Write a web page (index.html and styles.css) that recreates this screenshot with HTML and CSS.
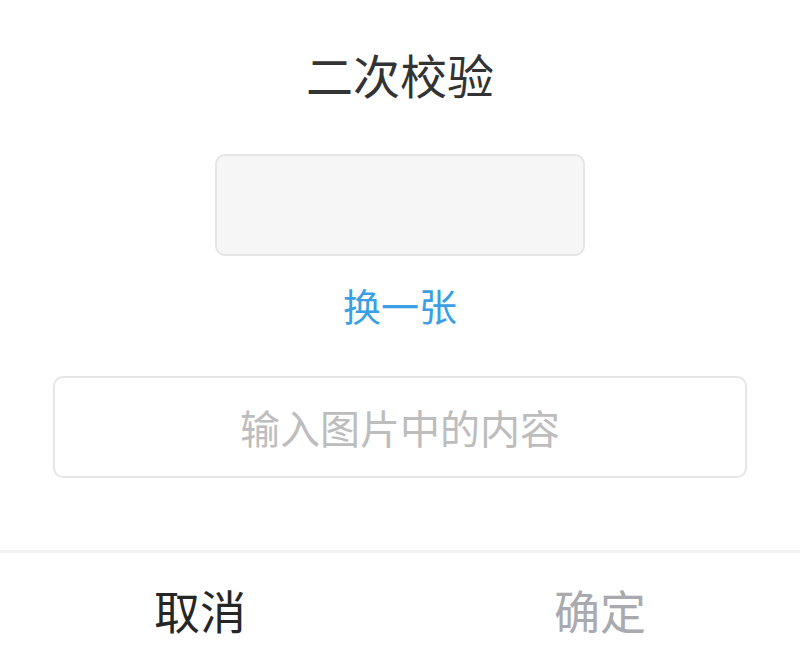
FILE: index.html
```html
<!DOCTYPE html>
<html lang="zh">
<head>
<meta charset="utf-8">
<title>二次校验</title>
<link rel="stylesheet" href="styles.css">
</head>
<body>
<div class="dialog">
  <div class="body">
    <h1 class="title">二次校验</h1>
    <div class="captcha"></div>
    <a class="refresh">换一张</a>
    <div class="field">
      <input class="input" type="text" placeholder="输入图片中的内容">
    </div>
  </div>
  <div class="actions">
    <button class="btn cancel">取消</button>
    <button class="btn confirm">确定</button>
  </div>
</div>
</body>
</html>
```
FILE: styles.css
```css
html, body {
  margin: 0;
  padding: 0;
  background: #ffffff;
}
body {
  font-family: "Noto Sans CJK SC", "Noto Sans", sans-serif;
  width: 800px;
  height: 664px;
  overflow: hidden;
}
.dialog {
  display: flex;
  flex-direction: column;
  height: 664px;
}
.body {
  display: flex;
  flex-direction: column;
  align-items: center;
  padding-top: 44px;
  height: 506px;
}
.title {
  margin: 0;
  font-size: 47px;
  font-weight: 400;
  line-height: 60px;
  color: #333333;
}
.captcha {
  margin-top: 50px;
  width: 366px;
  height: 98px;
  background: #f6f6f6;
  border: 2px solid #e6e6e6;
  border-radius: 10px;
}
.refresh {
  margin-top: 24px;
  font-size: 38px;
  line-height: 50px;
  color: #3b9fe6;
  cursor: pointer;
}
.field {
  margin-top: 46px;
  width: 694px;
}
.input {
  box-sizing: border-box;
  width: 694px;
  height: 102px;
  border: 2px solid #e6e6e6;
  border-radius: 10px;
  background: #fff;
  text-align: center;
  font-family: inherit;
  font-size: 40px;
  color: #333;
  outline: none;
  padding: 0;
}
.input::placeholder {
  color: #bdbdbd;
}
.actions {
  display: flex;
  border-top: 3px solid #f2f2f2;
  height: 111px;
}
.btn {
  flex: 1;
  border: none;
  background: #fff;
  font-family: inherit;
  font-size: 46px;
  padding: 0;
  cursor: pointer;
}
.cancel { color: #262626; }
.confirm { color: #a9a9b0; }
```
